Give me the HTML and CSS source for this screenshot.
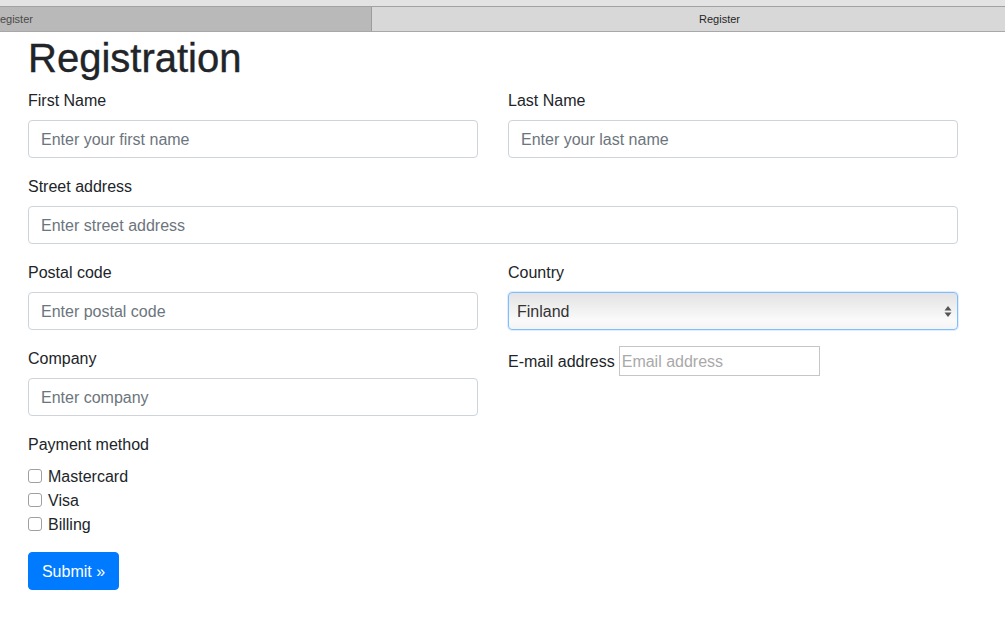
FILE: index.html
```html
<!DOCTYPE html>
<html>
<head>
<meta charset="utf-8">
<link rel="stylesheet" href="styles.css">
<title>Register</title>
</head>
<body>
<div class="chrome">
  <div class="tabs">
    <div class="tab tab-inactive"><span class="tab-cut">Register</span></div>
    <div class="tab tab-active">Register</div>
  </div>
</div>
<div class="container">
  <h1 class="title">Registration</h1>
  <div class="row">
    <div class="group">
      <label class="lbl">First Name</label>
      <input class="control" type="text" placeholder="Enter your first name">
    </div>
    <div class="group">
      <label class="lbl">Last Name</label>
      <input class="control" type="text" placeholder="Enter your last name">
    </div>
  </div>
  <div class="group">
    <label class="lbl">Street address</label>
    <input class="control" type="text" placeholder="Enter street address">
  </div>
  <div class="row">
    <div class="group">
      <label class="lbl">Postal code</label>
      <input class="control" type="text" placeholder="Enter postal code">
    </div>
    <div class="group">
      <label class="lbl">Country</label>
      <div class="select">
        <span>Finland</span>
        <svg class="arrows" width="8" height="13" viewBox="0 0 8 13"><path d="M4 1 L7.5 5.5 H0.5 Z M4 12 L7.5 7.5 H0.5 Z" fill="#555"/></svg>
      </div>
    </div>
  </div>
  <div class="row">
    <div class="group">
      <label class="lbl">Company</label>
      <input class="control" type="text" placeholder="Enter company">
    </div>
    <div class="group email-group">
      <label class="lbl-inline">E-mail address</label>
      <input class="plain" type="text" placeholder="Email address">
    </div>
  </div>
  <div class="group">
    <label class="lbl">Payment method</label>
    <div class="checks">
      <label class="check"><span class="box"></span>Mastercard</label>
      <label class="check"><span class="box"></span>Visa</label>
      <label class="check"><span class="box"></span>Billing</label>
    </div>
  </div>
  <button class="btn">Submit »</button>
</div>
</body>
</html>
```

FILE: styles.css
```css
* { box-sizing: border-box; }
html, body { margin: 0; padding: 0; background: #fff; }
body {
  font-family: "Liberation Sans", Arial, sans-serif;
  font-size: 16px;
  line-height: 1.5;
  color: #212529;
}
.chrome {
  background: #e3e3e3;
  padding-top: 6px;
}
.tabs {
  display: flex;
  height: 26px;
  border-top: 1px solid #a2a2a2;
  border-bottom: 1px solid #a8a8a8;
  font-size: 11px;
  line-height: 24px;
  color: #262626;
}
.tab { height: 24px; overflow: hidden; white-space: nowrap; }
.tab-inactive {
  width: 372px;
  background: #b9b9b9;
  border-right: 1px solid #9c9c9c;
  color: #4a4a4a;
}
.tab-cut { display: inline-block; margin-left: -8px; }
.tab-active {
  flex: 1;
  background: #d8d8d8;
  text-align: center;
  padding-left: 62px;
}
.container {
  width: 930px;
  margin-left: 28px;
}
.title {
  margin: 0 0 8px;
  padding-top: 2px;
  height: 48px;
  font-size: 40px;
  font-weight: 500;
  line-height: 48px;
  -webkit-text-stroke: 0.4px #212529;
}
.row {
  display: grid;
  grid-template-columns: 450px 450px;
  column-gap: 30px;
}
.group { margin-bottom: 16px; }
.lbl {
  display: block;
  margin-bottom: 8px;
  height: 24px;
  padding-top: 1px;
}
.control {
  display: block;
  width: 100%;
  height: 38px;
  padding: 7px 12px 5px;
  font: inherit;
  font-size: 16px;
  color: #495057;
  background: #fff;
  border: 1px solid #ced4da;
  border-radius: 4px;
  outline: none;
}
.control::placeholder { color: #6c757d; opacity: 1; }
.select {
  display: flex;
  align-items: center;
  justify-content: space-between;
  height: 38px;
  padding: 2px 8px 0;
  border: 1px solid #80bdff;
  border-radius: 4px;
  background: linear-gradient(#e3e3e3, #fafafa 75%, #f4f4f4);
  box-shadow: 0 0 0 1px rgba(128, 189, 255, 0.25);
  color: #333;
}
.arrows { margin-right: -3px; margin-top: -2px; }
.email-group {
  display: flex;
  align-items: center;
  height: 30px;
  padding-top: 1px;
}
.lbl-inline { margin-right: 4px; padding-top: 1px; }
.plain {
  width: 201px;
  height: 30px;
  margin-top: -1px;
  padding: 2px 2px 0;
  font: inherit;
  font-size: 16px;
  border: 1px solid #c6c6c6;
  border-radius: 0;
  outline: none;
  background: #fff;
}
.plain::placeholder { color: #a9a9a9; opacity: 1; }
.checks { display: flex; flex-direction: column; }
.check {
  display: flex;
  align-items: center;
  height: 24px;
  padding-top: 2px;
}
.box {
  width: 14px;
  height: 14px;
  margin-top: -2px;
  border: 1px solid #a0a0a0;
  border-radius: 3px;
  background: #fff;
  margin-right: 6px;
}
.btn {
  display: block;
  height: 38px;
  padding: 2px 12px 0;
  font: inherit;
  font-size: 16px;
  color: #fff;
  background: #007bff;
  border: 1px solid #007bff;
  border-radius: 4px;
  width: 91px;
}
```
